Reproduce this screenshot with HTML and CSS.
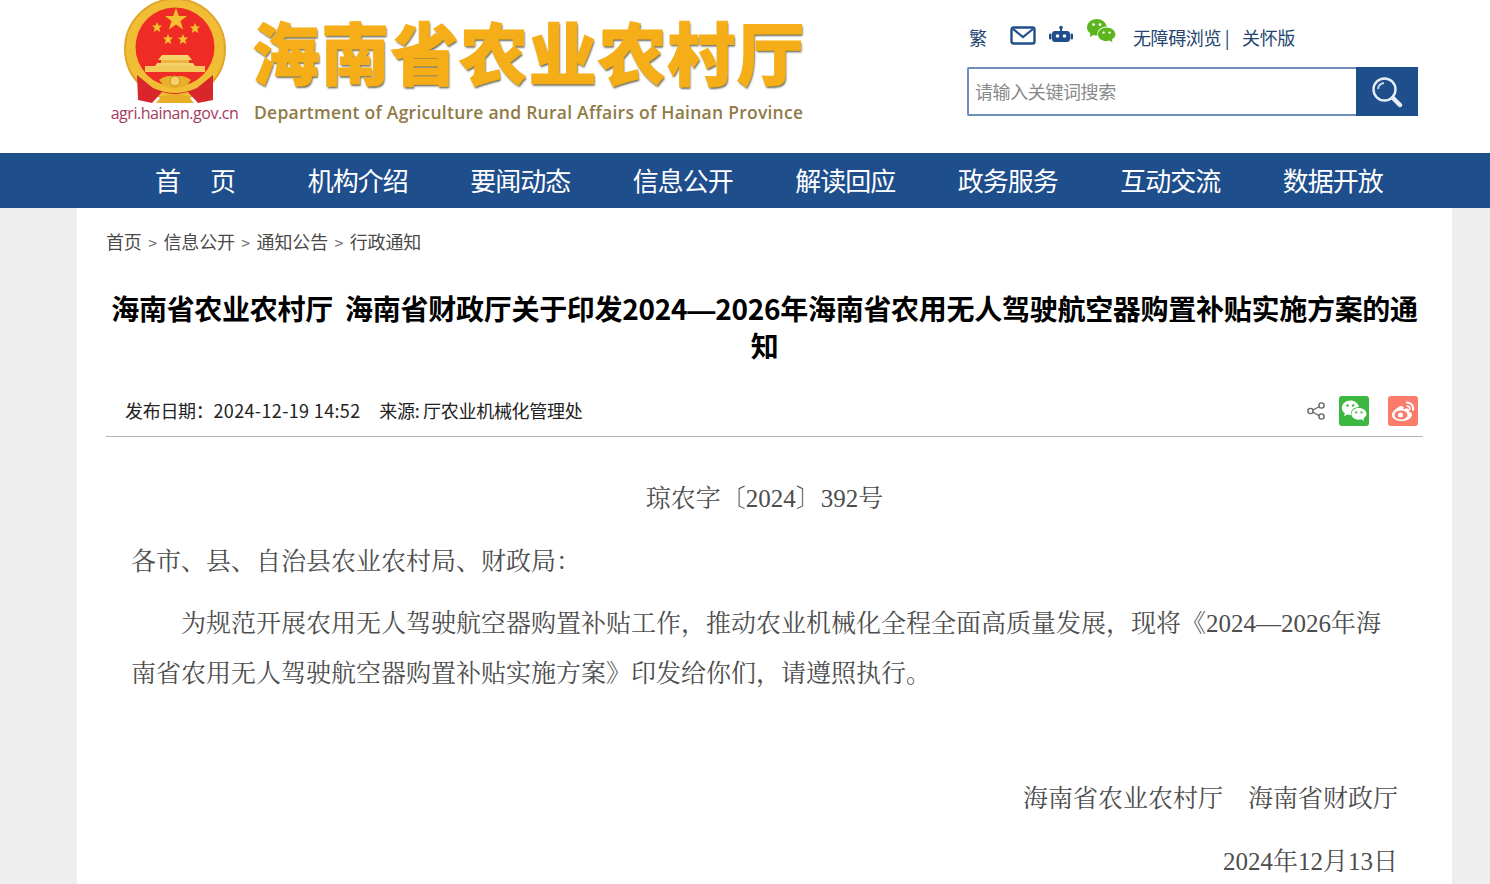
FILE: index.html
```html
<!DOCTYPE html>
<html lang="zh-CN">
<head>
    <meta charset="UTF-8">
    <meta name="viewport" content="width=device-width, initial-scale=1.0">
    <title>海南省农业农村厅</title>
    <link rel="stylesheet" href="styles.css">
</head>
<body>
    <header class="header">
        <div class="logo">
            <div class="logo-mark">
                <svg class="emblem" width="104" height="108" viewBox="0 0 104 108">
                    <circle cx="52" cy="51" r="50" fill="#f0bd35" stroke="#dfa62a" stroke-width="2"/>
                    <circle cx="52" cy="49" r="39.500" fill="#ee2b24"/>
                    <polygon points="53,10 55.800,18 64,18 57.500,23 60,31.500 53,26.500 46,31.500 48.500,23 42,18 50.200,18" fill="#f3c030"/>
                    <polygon points="34,24 35.500,27.500 39,27.500 36.300,30 37.200,34 34,32 30.800,34 31.700,30 29,27.500 32.500,27.500" fill="#f3c030"/>
                    <polygon points="72,25 73.500,28.500 77,28.500 74.300,31 75.200,35 72,33 68.800,35 69.700,31 67,28.500 70.500,28.500" fill="#f3c030"/>
                    <polygon points="45,36 46.500,39.500 50,39.500 47.300,42 48.200,46 45,44 41.800,46 42.700,42 40,39.500 43.500,39.500" fill="#f3c030"/>
                    <polygon points="60,36 61.500,39.500 65,39.500 62.300,42 63.200,46 60,44 56.800,46 57.700,42 55,39.500 58.500,39.500" fill="#f3c030"/>
                    <!-- gate -->
                    <path d="M39 57 L65 57 L69 62 L35 62 Z" fill="#f6d36a"/>
                    <rect x="38" y="62" width="28" height="3" fill="#e9b53a"/>
                    <path d="M34 65 L70 65 L72 68 L32 68 Z" fill="#f6d36a"/>
                    <rect x="22" y="68" width="60" height="6" fill="#f3c85a"/>
                    <!-- ribbons and bow -->
                    <path d="M14 77 L30 90 Q52 100 74 90 L90 77 L90 102 L75 105 L65 94 Q52 98 39 94 L29 105 L15 102 Z" fill="#d8262a"/>
                    <path d="M38 99 Q52 93 66 99 L71 105 L33 105 Z" fill="#e8ae25"/>
                    <path d="M36 82 Q44 76 52 79 Q60 76 68 82 Q62 91 52 90 Q42 91 36 82 Z" fill="#e9b02a"/>
                    <circle cx="52" cy="83" r="5" fill="#f6d36a" stroke="#c98f1e"/>
                </svg>
                <span class="logo-url">agri.hainan.gov.cn</span>
            </div>
            <div class="logo-text">
                <div class="logo-cn">海南省农业农村厅</div>
                <div class="logo-en">Department of Agriculture and Rural Affairs of Hainan Province</div>
            </div>
        </div>
        <div class="tools">
            <div class="tool-row">
                <a class="tool-link tool-trad">繁</a>
                <svg class="tool-mail" width="26" height="20" viewBox="0 0 26 20">
                    <rect x="1.500" y="1.500" width="23" height="16" rx="2" fill="none" stroke="#1f4e8c" stroke-width="2.400"/>
                    <path d="M3 3 L13 11 L23 3" fill="none" stroke="#1f4e8c" stroke-width="2.200"/>
                </svg>
                <svg class="tool-robot" width="24" height="18" viewBox="0 0 24 18">
                    <circle cx="12" cy="2.500" r="1.800" fill="#1f4e8c"/>
                    <rect x="11" y="3" width="2" height="4" fill="#1f4e8c"/>
                    <rect x="3" y="6" width="18" height="11" rx="3" fill="#1f4e8c"/>
                    <rect x="0" y="8.500" width="2.500" height="6" rx="1" fill="#1f4e8c"/>
                    <rect x="21.500" y="8.500" width="2.500" height="6" rx="1" fill="#1f4e8c"/>
                    <circle cx="8.500" cy="11" r="1.800" fill="#fff"/>
                    <circle cx="15.500" cy="11" r="1.800" fill="#fff"/>
                </svg>
                <svg class="tool-wechat" width="30" height="26" viewBox="0 0 30 26">
                    <path d="M11 1 C5 1 1 5 1 9.500 C1 12 2.400 14 4.400 15.500 L3.600 19 L7.400 17 C8.600 17.400 10 17.600 11.500 17.500 C10.600 12 15 8.600 20.800 8.400 C19.600 4 15.800 1 11 1 Z" fill="#5cb51e"/>
                    <path d="M20.500 9.600 C15.600 9.600 12 12.600 12 16.400 C12 20.200 15.600 23 20.500 23 C21.600 23 22.600 22.900 23.500 22.600 L26.600 24.400 L25.800 21.400 C28 20 29.400 18.400 29.400 16.400 C29.400 12.600 25.400 9.600 20.500 9.600 Z" fill="#5cb51e"/>
                    <circle cx="7.600" cy="6.600" r="1.400" fill="#fff"/>
                    <circle cx="14" cy="6.600" r="1.400" fill="#fff"/>
                    <circle cx="17.600" cy="14.600" r="1.200" fill="#fff"/>
                    <circle cx="23.600" cy="14.600" r="1.200" fill="#fff"/>
                </svg>
                <a class="tool-link tool-access">无障碍浏览 |</a>
                <a class="tool-link tool-care">关怀版</a>
            </div>
            <div class="search">
                <input class="search-input" type="text" placeholder="请输入关键词搜索">
                <button class="search-btn">
                    <svg width="34" height="34" viewBox="0 0 34 34">
                        <circle cx="14.500" cy="14.500" r="11" fill="none" stroke="#e6edf5" stroke-width="2.400"/>
                        <path d="M8 14 A7 7 0 0 1 14 8" fill="none" stroke="#c9d6e6" stroke-width="2"/>
                        <path d="M23 23 L30 30" stroke="#e6edf5" stroke-width="4.500" stroke-linecap="round"/>
                    </svg>
                </button>
            </div>
        </div>
    </header>

    <nav class="nav">
        <a class="nav-item nav-home">首　页</a>
        <a class="nav-item">机构介绍</a>
        <a class="nav-item">要闻动态</a>
        <a class="nav-item">信息公开</a>
        <a class="nav-item">解读回应</a>
        <a class="nav-item">政务服务</a>
        <a class="nav-item">互动交流</a>
        <a class="nav-item">数据开放</a>
    </nav>

    <main class="page">
        <div class="crumb">
            <a>首页</a><span class="crumb-sep">&gt;</span><a>信息公开</a><span class="crumb-sep">&gt;</span><a>通知公告</a><span class="crumb-sep">&gt;</span><a>行政通知</a>
        </div>
        <h1 class="title">海南省农业农村厅&nbsp;&nbsp;海南省财政厅关于印发2024<span class="title-dash">—</span>2026年海南省农用无人驾驶航空器购置补贴实施方案的通知</h1>
        <div class="meta">
            <div class="meta-text">
                <span>发布日期：<span class="meta-date">2024-12-19 14:52</span></span>
                <span class="meta-source">来源: 厅农业机械化管理处</span>
            </div>
            <div class="share">
                <svg class="share-icon" width="20" height="20" viewBox="0 0 20 20">
                    <path d="M14.500 5 L5 10 L14.500 15.500" fill="none" stroke="#666" stroke-width="1.300"/>
                    <circle cx="15.500" cy="4.500" r="2.600" fill="#fff" stroke="#666" stroke-width="1.400"/>
                    <circle cx="4.500" cy="10" r="2.600" fill="#fff" stroke="#666" stroke-width="1.400"/>
                    <circle cx="15.500" cy="15.500" r="2.600" fill="#fff" stroke="#666" stroke-width="1.400"/>
                </svg>
                <span class="share-tile tile-wechat">
                    <svg width="26" height="24" viewBox="0 0 30 26">
                        <path d="M11 1 C5 1 1 5 1 9.500 C1 12 2.400 14 4.400 15.500 L3.600 19 L7.400 17 C8.600 17.400 10 17.600 11.500 17.500 C10.600 12 15 8.600 20.800 8.400 C19.600 4 15.800 1 11 1 Z" fill="#fff"/>
                        <path d="M20.500 9.600 C15.600 9.600 12 12.600 12 16.400 C12 20.200 15.600 23 20.500 23 C21.600 23 22.600 22.900 23.500 22.600 L26.600 24.400 L25.800 21.400 C28 20 29.400 18.400 29.400 16.400 C29.400 12.600 25.400 9.600 20.500 9.600 Z" fill="#fff"/>
                        <circle cx="7.600" cy="6.600" r="1.400" fill="#3cb73f"/>
                        <circle cx="14" cy="6.600" r="1.400" fill="#3cb73f"/>
                        <circle cx="17.600" cy="14.600" r="1.200" fill="#3cb73f"/>
                        <circle cx="23.600" cy="14.600" r="1.200" fill="#3cb73f"/>
                    </svg>
                </span>
                <span class="share-tile tile-weibo">
                    <svg width="26" height="24" viewBox="0 0 26 24">
                        <path d="M11 7 C6 9 2 13 2 16 C2 20 7 22 12 22 C18 22 22 18.500 22 15.500 C22 13.500 20 13 19 12.500 C19.800 10.500 19 9 16 9.500 L13.500 10.500 C14 8 13 6.500 11 7 Z" fill="#fff"/>
                        <ellipse cx="11" cy="16" rx="6.500" ry="4.500" fill="#fb7c6c"/>
                        <circle cx="10.500" cy="16" r="2.500" fill="#fff"/>
                        <path d="M16 3.500 C20.500 3 24 6.500 23 11.500" fill="none" stroke="#fff" stroke-width="2"/>
                        <path d="M16.500 7 C18.800 6.800 20.300 8.500 19.800 10.800" fill="none" stroke="#fff" stroke-width="1.600"/>
                    </svg>
                </span>
            </div>
        </div>
        <article class="content">
            <p class="center">琼农字〔2024〕392号</p>
            <p>各市、县、自治县农业农村局、财政局：</p>
            <p class="indent">为规范开展农用无人驾驶航空器购置补贴工作，推动农业机械化全程全面高质量发展，现将《2024—2026年海南省农用无人驾驶航空器购置补贴实施方案》印发给你们，请遵照执行。</p>
            <p>&nbsp;</p>
            <p class="right">海南省农业农村厅　海南省财政厅</p>
            <p class="right">2024年12月13日</p>
        </article>
    </main>
</body>
</html>
```

FILE: styles.css
```css
* {
    box-sizing: border-box;
}
html, body {
    height: 100%;
}
body {
    margin: 0;
    background-color: #eeeeee;
    font-family: "Noto Sans CJK SC", sans-serif;
    overflow: hidden;
}
a {
    color: inherit;
    text-decoration: none;
}

/* header */
.header {
    height: 153px;
    background-color: #fff;
    padding: 0 72px 0 110px;
    display: flex;
    justify-content: space-between;
}
.logo {
    display: flex;
    gap: 15px;
}
.logo-mark {
    width: 129px;
    display: flex;
    flex-direction: column;
    align-items: center;
}
.emblem {
    display: block;
    margin-top: -2px;
}
.logo-url {
    margin-top: -3px;
    font-family: "Open Sans", sans-serif;
    font-size: 16px;
    line-height: 20px;
    letter-spacing: -0.450px;
    white-space: nowrap;
    color: #a53a5c;
}
.logo-text {
    padding-top: 11px;
    margin-left: -2px;
}
.logo-cn {
    font-size: 68px;
    line-height: 80px;
    font-weight: 900;
    letter-spacing: 1.200px;
    white-space: nowrap;
    color: #f5ae17;
    -webkit-text-stroke: 1px #f5ae17;
    text-shadow: 1px 2px 2px #6b6b5a;
}
.logo-en {
    margin: 10px 0 0 2px;
    font-family: "Open Sans", sans-serif;
    font-size: 17.500px;
    line-height: 22px;
    font-weight: 600;
    letter-spacing: 0.250px;
    white-space: nowrap;
    color: #8f7b45;
}
.tools {
    width: 451px;
}
.tool-row {
    height: 67px;
    display: flex;
    align-items: flex-start;
    color: #24456f;
    font-size: 18px;
}
.tool-link {
    line-height: 26px;
    margin-top: 24px;
    white-space: nowrap;
    letter-spacing: -0.400px;
}
.tool-trad {
    margin-left: 2px;
    width: 41px;
}
.tool-mail {
    margin-top: 26px;
}
.tool-robot {
    margin: 25px 0 0 13px;
}
.tool-wechat {
    margin: 18px 0 0 13px;
}
.tool-access {
    margin-left: 17px;
}
.tool-care {
    margin-left: 13px;
}
.search {
    height: 49px;
    border: 2px solid #6d8fba;
    border-right: none;
    border-radius: 2px;
    background-color: #fff;
    display: flex;
}
.search-input {
    flex: 1;
    min-width: 0;
    border: none;
    outline: none;
    padding: 0 6px 2px;
    font-family: inherit;
    font-size: 18px;
    letter-spacing: -0.400px;
    background: transparent;
}
.search-input::placeholder {
    color: #8a8a8a;
    opacity: 1;
}
.search-btn {
    width: 62px;
    margin: -2px 0;
    border: none;
    padding: 0;
    background-color: #1f4e8c;
    display: flex;
    align-items: center;
    justify-content: center;
}

/* nav */
.nav {
    height: 55px;
    background-color: #1f4e8c;
    padding-left: 114px;
    display: flex;
}
.nav-item {
    width: 162.500px;
    text-align: center;
    color: #fff;
    font-size: 26px;
    line-height: 53px;
    letter-spacing: -1px;
}
.nav-home {
    padding-left: 2px;
    letter-spacing: 1.500px;
}

/* page */
.page {
    margin-left: 77px;
    width: 1375px;
    min-height: 676px;
    background-color: #fff;
    padding: 0 29px;
}
.crumb {
    padding: 21px 0 0;
    font-size: 18px;
    line-height: 24px;
    letter-spacing: -0.150px;
    color: #4a4a4a;
}
.crumb-sep {
    margin: 0 6.500px;
    font-size: 16px;
    color: #777;
}
.title {
    margin: 36px 0 0;
    font-size: 28px;
    line-height: 37px;
    font-weight: 700;
    text-align: center;
    letter-spacing: -0.280px;
    color: #000;
}
.title-dash {
    font-family: "Liberation Sans", sans-serif;
    line-height: 1;
    letter-spacing: 0;
}
.meta {
    margin-top: 29px;
    height: 44px;
    border-bottom: 1px solid #b2b2b2;
    padding: 0 5px 0 19px;
    display: flex;
    justify-content: space-between;
}
.meta-text {
    padding-top: 2px;
    font-size: 18px;
    line-height: 30px;
    letter-spacing: -0.300px;
    color: #222;
}
.meta-date {
    letter-spacing: 0.350px;
}
.meta-source {
    margin-left: 15px;
}
.share {
    padding-top: 3px;
    display: flex;
    align-items: flex-start;
}
.share-icon {
    margin: 5px 13px 0 0;
}
.share-tile {
    width: 30px;
    height: 30px;
    border-radius: 3px;
    display: flex;
    align-items: center;
    justify-content: center;
}
.tile-wechat {
    background-color: #3cb73f;
}
.tile-weibo {
    margin-left: 19px;
    background-color: #fb7c6c;
}
.content {
    padding: 37px 25px 0 25px;
    font-family: "Liberation Serif", "Noto Serif CJK SC", serif;
    font-size: 25px;
    line-height: 50px;
    color: #4d4d4d;
}
.content p {
    margin: 0 0 12.500px;
}
.center {
    text-align: center;
}
.right {
    text-align: right;
}
.indent {
    text-indent: 2em;
}
```
